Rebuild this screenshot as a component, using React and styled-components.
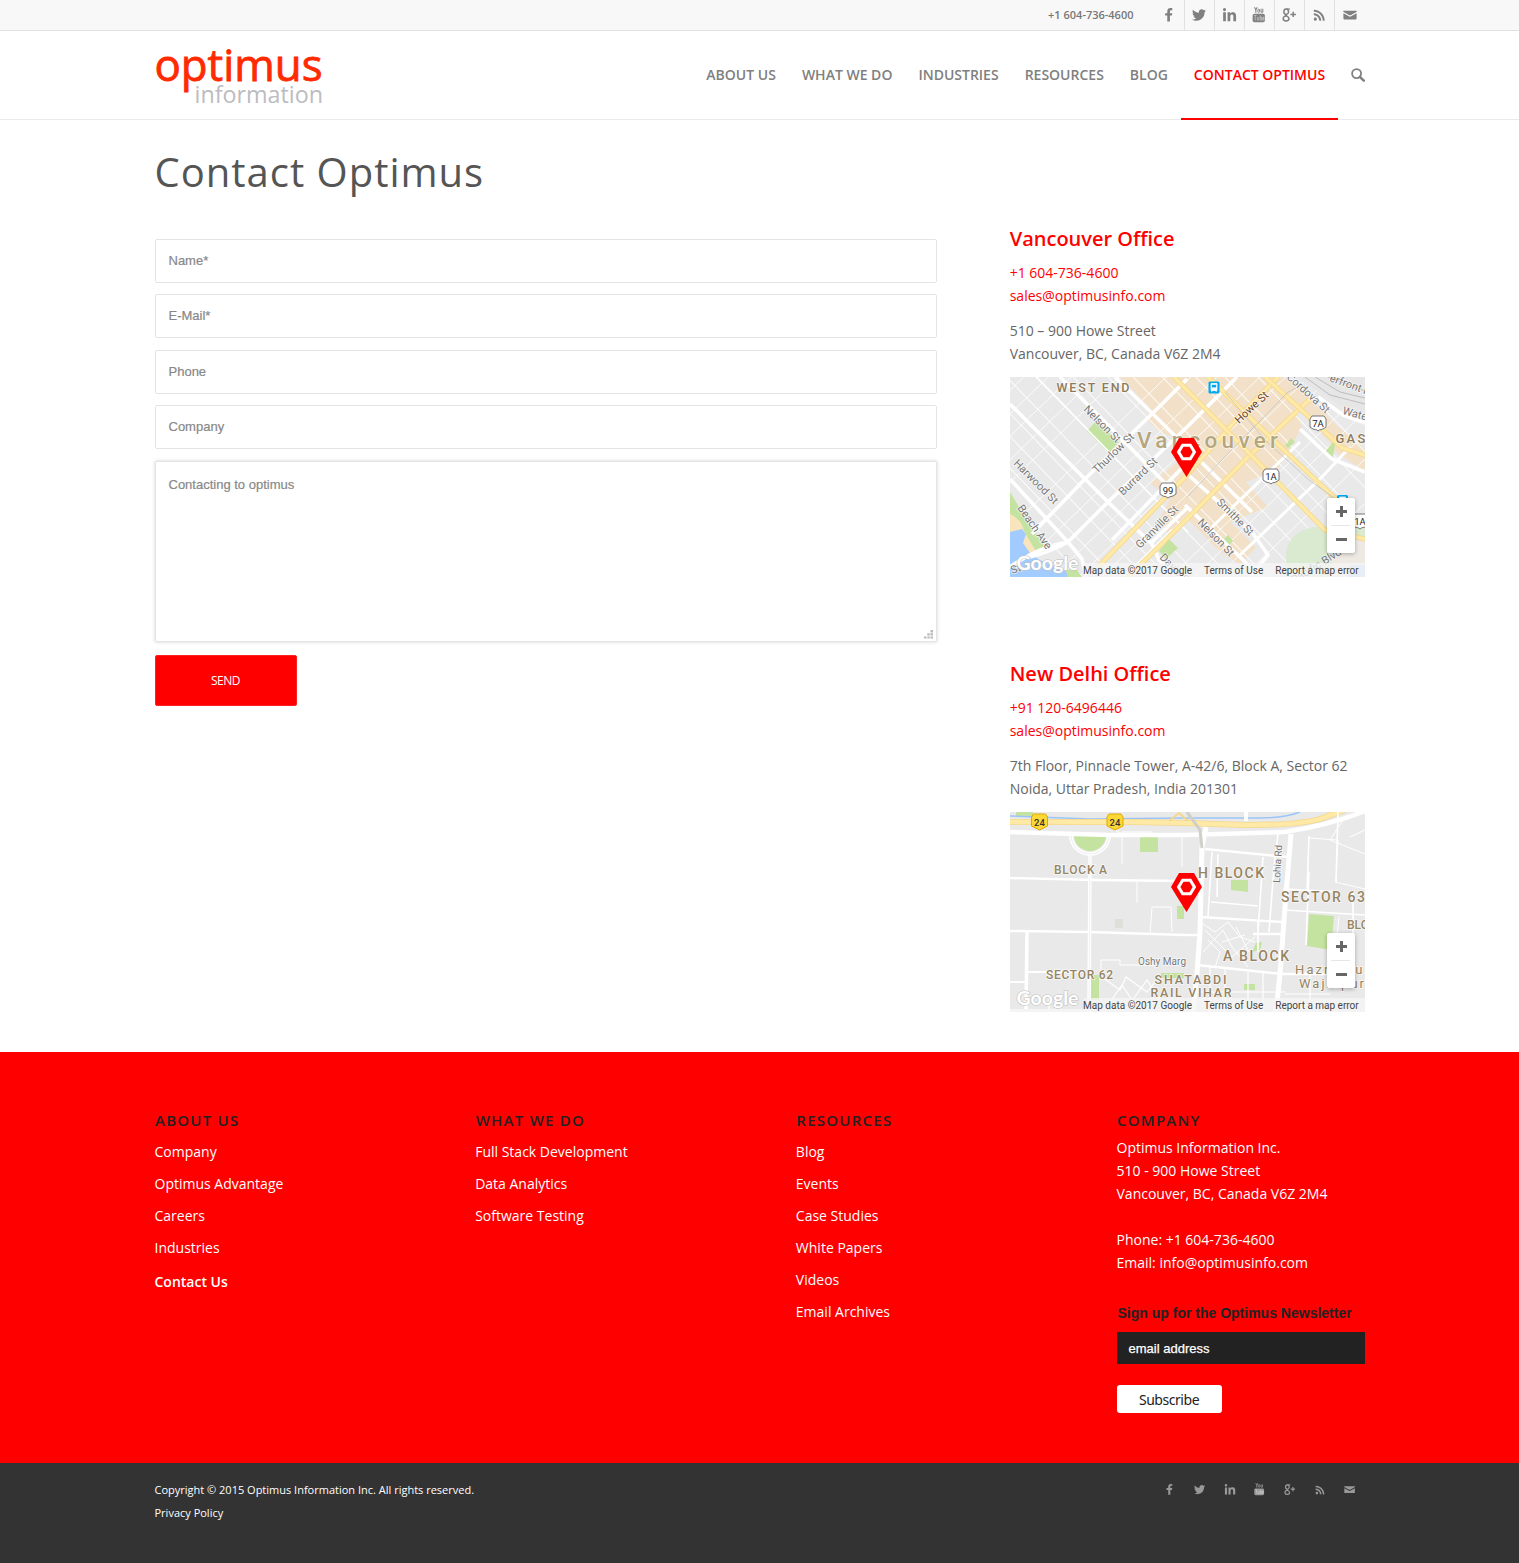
import React from 'react';
import styled, { createGlobalStyle, css } from 'styled-components';
import { FaFacebookF, FaTwitter, FaLinkedinIn, FaRss } from 'react-icons/fa';

const GlobalStyle = createGlobalStyle`
  *, *::before, *::after { box-sizing: border-box; }
  body { margin: 0; background: #fff; font-family: 'Open Sans', 'Noto Sans', sans-serif; font-size: 14px; line-height: 23px; color: #666; }
  a { color: inherit; text-decoration: none; }
  h1, h2, h3, p, ul { margin: 0; padding: 0; font-weight: 400; }
  ul { list-style: none; }
`;

const Container = styled.div`
  width: 1210px;
  margin: 0 auto;
  display: flex;
  justify-content: ${p => p.$justify || 'flex-start'};
`;

/* ---------- top bar ---------- */
const TopBar = styled.div`
  height: 31px;
  background: #f8f8f8;
  border-bottom: 1px solid #e1e1e1;
`;
const TopPhone = styled.div`
  font-size: 11px;
  font-weight: 600;
  line-height: 30px;
  color: #777;
  margin-right: 21px;
`;
const SocialList = styled.ul`
  display: flex;
`;
const SocialItem = styled.li`
  width: 30px;
  height: ${p => (p.$small ? 23 : 30)}px;
  display: flex;
  align-items: center;
  justify-content: center;
  color: ${p => (p.$small ? '#999' : '#808080')};
  ${p => !p.$small && css`
    &:not(:last-child) { border-right: 1px solid #e1e1e1; }
  `}
  svg {
    display: block;
    width: ${p => p.$size * (p.$small ? 0.8 : 1)}px;
    height: ${p => p.$size * (p.$small ? 0.8 : 1)}px;
  }
`;

/* ---------- header ---------- */
const Header = styled.header`
  height: 89px;
  border-bottom: 1px solid #ebebeb;
`;
const Nav = styled.nav`
  display: flex;
`;
const NavLink = styled.a`
  height: 89px;
  line-height: 88px;
  padding: 0 ${p => (p.$active ? 12.4 : 13)}px 0 13px;
  font-size: 14px;
  font-weight: 600;
  white-space: nowrap;
  color: ${p => (p.$active ? '#f00' : '#808080')};
  border-bottom: 2px solid ${p => (p.$active ? '#f00' : 'transparent')};
`;
const SearchLink = styled.a`
  display: flex;
  align-items: center;
  height: 88px;
  padding-left: 13px;
  color: #808080;
`;

/* ---------- main ---------- */
const Main = styled.main`
  height: 932px;
`;
const FormColumn = styled.section`
  width: 782.4px;
  margin-right: 72.8px;
`;
const Title = styled.h1`
  margin-top: 27px;
  height: 91.6px;
  font-size: 40px;
  line-height: 50px;
  letter-spacing: 1px;
  color: #555;
`;
const Field = styled.div`
  height: 44px;
  margin-bottom: 11.5px;
  padding: 0 13px;
  border: 1px solid #e4e4e4;
  border-radius: 2px;
  font: 400 13px/42.6px 'Liberation Sans', Arial, sans-serif;
  -webkit-text-stroke: 0.2px #888;
  color: #888;
`;
const MessageField = styled(Field)`
  height: 181px;
  margin-bottom: 13.4px;
  display: flex;
  justify-content: space-between;
  align-items: flex-end;
  padding-right: 2px;
  line-height: 45px;
  box-shadow: 0 0 3px 1px rgba(0, 0, 0, 0.1);
  span { align-self: flex-start; }
  svg { display: block; margin-bottom: 1px; }
`;
const SendButton = styled.button`
  display: block;
  width: 142px;
  height: 51px;
  border: 1px solid #f22;
  border-radius: 2px;
  background: #f00;
  color: #fff;
  font: 400 12px 'Open Sans', sans-serif;
  letter-spacing: -0.5px;
`;
const Sidebar = styled.aside`
  width: 355px;
  flex: none;
  margin-right: -1px;
  padding-top: 105px;
`;
const Office = styled.section`
  height: 435px;
`;
const OfficeTitle = styled.h2`
  font-size: 20px;
  font-weight: 600;
  line-height: 28px;
  height: 36px;
  color: #f00;
`;
const OfficeLines = styled.p`
  margin-bottom: 12px;
  color: ${p => (p.$red ? '#f00' : '#666')};
  white-space: nowrap;
  span { display: block; }
`;

/* ---------- map ---------- */
const MapBox = styled.div`
  position: relative;
  width: 355px;
  height: 200px;
  overflow: hidden;
  > svg { display: block; }
`;
const ZoomControl = styled.div`
  position: absolute;
  right: 10px;
  bottom: 24px;
  width: 28px;
  height: 55px;
  border-radius: 2px;
  background: #fff;
  box-shadow: 0 1px 4px rgba(0, 0, 0, 0.3);
  svg { display: block; }
`;
const Attribution = styled.div`
  position: absolute;
  right: 0;
  bottom: 0;
  width: 281px;
  height: 14px;
  padding: 0 6px 0 0;
  display: flex;
  justify-content: flex-end;
  gap: 12px;
  background: rgba(245, 245, 245, 0.75);
  font: 400 10px/15px Roboto, sans-serif;
  color: #444;
  white-space: nowrap;
`;

/* ---------- footer ---------- */
const Footer = styled.footer`
  height: 411px;
  background: #f00;
  padding-top: 57px;
  color: #fff;
`;
const FooterColumn = styled.section`
  width: 248px;
  margin-right: ${p => (p.$last ? 0 : 72.7)}px;
  white-space: nowrap;
`;
const FooterTitle = styled.h3`
  padding-left: 0.5px;
  font-size: 15px;
  font-weight: 600;
  line-height: 23px;
  letter-spacing: 1.25px;
  color: #222;
`;
const FooterLink = styled.li`
  height: 32px;
  line-height: 23px;
  padding-top: ${p => (p.$current ? 6 : 4)}px;
  font-weight: ${p => (p.$current ? 600 : 400)};
`;
const Links = styled.ul`
  padding-top: 4px;
`;
const Address = styled.p`
  margin: 4px 0 23px;
  span { display: block; }
`;
const Signup = styled.div`
  display: flex;
  flex-direction: column;
  align-items: flex-start;
  margin-top: 27px;
`;
const SignupLabel = styled.div`
  font: 700 14px/25px 'Liberation Sans', Arial, sans-serif;
  height: 31px;
  padding-left: 1px;
  color: #222;
`;
const EmailField = styled.div`
  width: 100%;
  height: 32px;
  padding-left: 12px;
  background: #222;
  font: 400 13px/33px 'Liberation Sans', Arial, sans-serif;
  -webkit-text-stroke: 0.25px #fff;
  color: #fff;
`;
const Subscribe = styled.button`
  margin-top: 21px;
  width: 105px;
  height: 28px;
  padding: 0;
  border: 0;
  border-radius: 3px;
  background: #fff;
  font: 400 14px/29px 'Noto Sans', sans-serif;
  letter-spacing: -0.45px;
  color: #222;
`;
const Socket = styled.div`
  height: 100px;
  background: #333;
  padding-top: 15px;
  font-size: 11px;
  color: #fff;
  span { display: block; }
`;

/* ---------- icons ---------- */
const YoutubeIcon = () => (
  <svg viewBox="-1 0 16 16" fill="none" stroke="currentColor">
    <path d="M2.6 0.3 4 3 5.4 0.3M4 3V6" strokeWidth="1.1" />
    <rect x="6.1" y="2.3" width="1.7" height="3.3" rx=".8" strokeWidth="1" />
    <path d="M9.4 1.8V5.4H11.2V1.8" strokeWidth="1" />
    <rect x=".7" y="7" width="12.6" height="8.8" rx="1.8" fill="currentColor" stroke="none" />
    <path d="M2 8.8H4.8M3.4 8.8V14M5.6 10.2V13.6H7.1V10.2M8.5 8.5V13.6H9.9V10.5H8.5M12.4 12.5V13.6H11.1V10.5H12.4V12H11.1" stroke="#f0f0f0" strokeOpacity=".75" strokeWidth=".6" />
  </svg>
);
const GooglePlusIcon = () => (
  <svg viewBox="0 0 14 14" fill="none" stroke="currentColor">
    <path d="M8 1H4.1" strokeWidth="1.1" />
    <ellipse cx="4.2" cy="3.7" rx="2.3" ry="2.7" strokeWidth="1.5" />
    <path d="M4 6.3C3.2 7 3.9 7.5 4.9 8.1M4.2 8.1C2.3 8.1 1.2 9 1.2 10.5S2.3 12.9 4 12.9 7 12 7 10.5C7 9.4 6.2 8.8 4.9 8.1Z" strokeWidth="1.5" />
    <path d="M8.4 6.4H13.9M11.2 3.7V9.1" strokeWidth="1.5" />
  </svg>
);
const MailIcon = () => (
  <svg viewBox="0 0 14 14" fill="currentColor">
    <path d="M.6 2.8H13.4C14 2.8 13.8 3.7 13.4 4L7.6 7.2Q7 7.5 6.4 7.2L.6 4C.2 3.7 0 2.8.6 2.8ZM.4 5.2 6.3 8.5Q7 8.8 7.7 8.5L13.6 5.2V10.6Q13.6 11.4 12.8 11.4H1.2Q.4 11.4.4 10.6Z" />
  </svg>
);
const SearchIcon = () => (
  <svg width="14" height="14" viewBox="0 0 14 14" fill="none" stroke="currentColor">
    <circle cx="5.6" cy="5.6" r="4.5" strokeWidth="1.8" />
    <path d="M8.8 8.8 12.8 12.6" strokeWidth="2.5" strokeLinecap="round" />
  </svg>
);
const Logo = () => (
  <svg width="170" height="88" viewBox="0 0 170 88">
    <g fontFamily="'Open Sans', 'Noto Sans', sans-serif">
      <text x="-.5" y="49.7" fontSize="44" fill="#ff2a00" stroke="#ff2a00" strokeWidth=".8" textLength="168" lengthAdjust="spacingAndGlyphs">optimus</text>
      <text x="39.5" y="71.6" fontSize="23" fill="#bcbcc0" textLength="128.5" lengthAdjust="spacingAndGlyphs">information</text>
    </g>
  </svg>
);
const Grip = () => (
  <svg width="10" height="10" viewBox="0 0 10 10" fill="#b8b8b8">
    <path d="M6.5 0h2.5v2.5H6.5zM6.5 3.2h2.5v2.3H6.5zM3.3 3.2h2.4v2.3H3.3zM6.5 6.5h2.5v2H6.5zM3.3 6.5h2.4v2H3.3zM0 6.5h2.4v2H0z" />
  </svg>
);

const socials = [
  { Icon: FaFacebookF, size: 13.5 },
  { Icon: FaTwitter, size: 14 },
  { Icon: FaLinkedinIn, size: 15 },
  { Icon: YoutubeIcon, size: 15.5 },
  { Icon: GooglePlusIcon, size: 14 },
  { Icon: FaRss, size: 12.5 },
  { Icon: MailIcon, size: 14 },
];
const Social = ({ small }) => (
  <SocialList>
    {socials.map(({ Icon, size }, i) => <SocialItem key={i} $small={small} $size={size}><Icon /></SocialItem>)}
  </SocialList>
);

/* ---------- map drawings ---------- */
const Road = ({ d, w = 3, c = '#fff' }) => (
  <path d={d} fill="none" stroke={c} strokeWidth={w} strokeLinejoin="round" />
);
const Highway = ({ d, w = 4 }) => (
  <>
    <Road d={d} w={w + 1} c="#f5d78c" />
    <Road d={d} w={w - 0.6} c="#ffe9a6" />
  </>
);
const Label = ({ x, y, size = 11, rotate = 0, color = '#777', len, weight = 400, children }) => (
  <text
    transform={`translate(${x} ${y}) rotate(${rotate})`}
    fontFamily="Roboto, sans-serif"
    fontSize={size}
    fontWeight={weight}
    fill={color}
    stroke="#fff"
    strokeOpacity=".7"
    strokeWidth="1.6"
    paintOrder="stroke"
    textLength={len}
  >
    {children}
  </text>
);
const Pin = () => (
  <g>
    <path d="M169 61H184L192 75 176.5 100 161 75Z" fill="#f00" />
    <path d="M171.8 66.8H181.2L186.2 75 181.2 83.2H171.8L166.8 75Z" fill="#fff" />
    <path d="M173.5 69.8H179.5L182.6 75 179.5 80.2H173.5L170.4 75Z" fill="#f00" />
  </g>
);
const GoogleMark = () => (
  <text x="6.5" y="192.5" fontFamily="Lato, sans-serif" fontSize="19.5" fontWeight="700" fill="#fff" stroke="#c0c0c0" strokeWidth="1.2" paintOrder="stroke" textLength="62">Google</text>
);
const Shield = ({ x, y, children }) => (
  <g>
    <path d={`M${x - 6} ${y - 7}H${x + 6}L${x + 8} ${y - 4}V${y + 4}L${x + 5} ${y + 6}Q${x} ${y + 7} ${x} ${y + 8}Q${x} ${y + 7} ${x - 5} ${y + 6}L${x - 8} ${y + 4}V${y - 4}Z`} fill="#fff" stroke="#777" />
    <text x={x} y={y + 3.5} textAnchor="middle" fontFamily="Roboto, sans-serif" fontSize="9.5" fill="#222">{children}</text>
  </g>
);
const YellowShield = ({ x }) => (
  <g>
    <path d={`M${x - 6} 2H${x + 6}L${x + 8} 5V14L${x} 18 ${x - 8} 14V5Z`} fill="#fdd835" stroke="#dca900" />
    <text x={x} y="13.5" textAnchor="middle" fontFamily="Roboto, sans-serif" fontSize="9.5" fontWeight="500" fill="#333">24</text>
  </g>
);
const Transit = ({ x, y }) => (
  <g transform={`translate(${x} ${y})`}>
    <rect width="11" height="12" rx="1.5" fill="#00a9ef" />
    <path d="M2.5 2H8.5V9H2.5ZM3 10.5 4 9M8 10.5 7 9" fill="#fff" stroke="#fff" strokeWidth=".8" />
    <rect x="3.3" y="3.3" width="4.4" height="2.6" fill="#00a9ef" />
  </g>
);

const acrossStreets = [-150, -132, -116, -99, -83, -66, -50, -17, 0, 18, 48, 66, 82, 97, 130, 146, 162, 180, 212, 228, 245, 262, 280, 297];
const downStreets = [-210, -191, -166, -145, -122, -100, -84, -61, -39, -13, 12, 30, 51, 75, 96, 120, 145, 168, 190];

const VancouverDrawing = () => (
  <svg width="355" height="200" viewBox="0 0 355 200">
    <rect width="355" height="200" fill="#e9e9e9" />
    <path d="M110 0H240L275 14 300 46 330 75 355 84V72L326 48 290 12 276 0H255L238 0H110L139 30 138 44 150 55 164 60 172 70 180 76 140 106 160 122 148 145 162 160 178 142 205 170 230 188 246 170 220 145 258 130 236 105 268 92 292 50 280 20 255 0Z" fill="#f2e1c8" />
    <path d="M300 30 355 75V94L325 75Z" fill="#f2e1c8" />
    <g transform="translate(178 100) rotate(-44)">
      {acrossStreets.map(y => <path key={y} d={`M-260 ${y - 70}H260`} stroke="#fff" strokeWidth=".9" strokeOpacity=".85" />)}
      {downStreets.map(x => <path key={x} d={`M${x} -250V250`} stroke="#fff" strokeWidth="1" strokeOpacity=".85" />)}
    </g>
    <path d="M285 0H355V38L330 28Z" fill="#e6e6e6" />
    <Road d="M295 0 320 18 355 27M305 0 330 15 355 21M318 0 355 14" w={1} c="#bdbdbd" />
    <path d="M0 115 18 145 36 171 30 178 22 180 0 145Z" fill="#c5e3a0" />
    <path d="M0 137Q12 143 14 154L27 176 16 181 0 165Z" fill="#f8e4bd" />
    <path d="M0 155 12 152 16 157 13 166 20 176 30 183 70 200H0Z" fill="#a2ccff" />
    <path d="M86 44 77 54 99 76 109 65Z" fill="#c5e3a0" />
    <path d="M159 162 168 171 156 182 149 174ZM56 194 65 190 72 200H58Z" fill="#c5e3a0" />
    <path d="M326 61 315 75 323 80ZM275 69 281 61 285 65 278 71ZM214 162 218 158 223 164 219 168Z" fill="#c5e3a0" />
    <path d="M276 177Q278 155 304 150H355V200H276Z" fill="#d9ead0" />
    <path d="M325 160 355 164V200H320Z" fill="#eeeae3" />
    <path d="M340 188H355V200H337Z" fill="#bdd6f8" />
    <Road d="M0 27 75 102 98 125 142 167 149 183 172 200M0 102 58 165M50 0 98 48 155 106" w={3.6} />
    <Road d="M26 0 73 48 138 115 178 155" w={1.5} />
    <Road d="M22 157 75 102 152 27 177 2M58 165 98 125 177 50 227 0M102 163 175 88M142 165 178 130M20 180Q40 175 58 165L72 182 76 200M0 190Q28 170 58 165" w={3.6} />
    <Road d="M115 200 163 153M175 95 242 155 258 178 240 200M175 128 230 180 250 200M105 0 147 41 175 69 242 135M290 52 322 82 355 95M308 20 333 38 355 46" w={3.6} />
    <Road d="M230 178 312 100 340 70M202 150 290 65" w={3} />
    <Highway d="M88 190 177 98 225 44 268 0" w={4} />
    <Highway d="M115 203 177 142 238 80 300 22" w={4} />
    <Highway d="M164 0 238 75 315 153 355 162M198 0 255 55 328 124M255 0 308 48 332 71 355 78" w={4} />
    <Road d="M177 120 210 85 278 15 292 8M215 15 255 63 299 103 330 125" w={0.8} c="#c3c3c3" />
    <Label x={46.5} y={14.5} size={12.5} weight={500} color="#8f7a58" len={73}>WEST END</Label>
    <Label x={127} y={70.5} size={22.5} weight={500} color="#b5a67e" len={141}>Vancouver</Label>
    <Label x={325.5} y={65.5} size={13} weight={500} color="#8f7a58" len={40}>GAST</Label>
    <Label x={73} y={33} rotate={45}>Nelson St</Label>
    <Label x={3} y={87} rotate={45}>Harwood St</Label>
    <Label x={7} y={131} rotate={55}>Beach Ave</Label>
    <Label x={87} y={97} rotate={-44}>Thurlow St</Label>
    <Label x={113} y={119} rotate={-44}>Burrard St</Label>
    <Label x={130} y={172} rotate={-45}>Granville St</Label>
    <Label x={149} y={181} rotate={45}>Davie St</Label>
    <Label x={229} y={47} rotate={-43} color="#6b4226">Howe St</Label>
    <Label x={206} y={126} rotate={45}>Smithe St</Label>
    <Label x={187} y={146} rotate={46}>Nelson St</Label>
    <Label x={276} y={1} rotate={42}>Cordova St</Label>
    <Label x={319} y={4} rotate={20}>erfront Rd</Label>
    <Label x={332} y={37} rotate={15}>Water St</Label>
    <Label x={284} y={207} rotate={-32}>Pacific Blvd</Label>
    <Label x={2} y={197} rotate={-18}>St</Label>
    <Shield x={158} y={113}>99</Shield>
    <Shield x={308} y={46}>7A</Shield>
    <Shield x={261} y={99}>1A</Shield>
    <Shield x={350} y={144}>1A</Shield>
    <Transit x={198.5} y={4.5} />
    <Transit x={327} y={118} />
    <Pin />
    <GoogleMark />
  </svg>
);

const DelhiDrawing = () => (
  <svg width="355" height="200" viewBox="0 0 355 200">
    <rect width="355" height="200" fill="#e9e9e9" />
    <path d="M6 0H23V5H6ZM130 25H148V40H130ZM167 94H174V107H167ZM81 163H89V188H81ZM221 68H238V80L221 78ZM299 102 324 104 321 138 297 134ZM242 140 246 131 252 130 250 138ZM234 172H245V178H234ZM151 161H174V166H151Z" fill="#c5e3a0" />
    <path d="M105 107H113V116H105Z" fill="#dedfd7" />
    <path d="M64 23H96A16 16 0 0 1 64 23Z" fill="#c5e3a0" />
    <Road d="M61 23A19 19 0 0 0 99 23" w={4} />
    <Road d="M61 23A19 19 0 0 0 99 23" w={0.7} c="#e3e3e3" />
    <Road d="M0 4 80 7 170 6 250 6Q275 6 290 0" w={1.5} c="#9bc5fa" />
    <Road d="M0 20 100 23 175 23 275 20Q320 13 355 -1" w={4.5} />
    <Highway d="M0 10H125L175 11 235 13Q290 13 310 7L335 -2" w={5} />
    <Road d="M159 9 169 1 178 9" w={2} c="#f5d78c" />
    <Road d="M0 66 85 68 175 69M0 119 80 120 175 123H190" w={2.4} />
    <Road d="M80 42 79 200M17 120 16 200" w={3.5} />
    <Road d="M80 42 79 200" w={0.6} c="#e5e5e5" />
    <Road d="M17 160H75M0 170H16" w={2} />
    <Road d="M196 15 192 35 190 120 187 162 183 200M281 22 275 95 270 162 266 200" w={5} />
    <Road d="M177 0 190 18 192 36" w={3} c="#d0d0c9" />
    <Road d="M236 0V9" w={4} />
    <Road d="M195 37 278 45M190 105 272 110M187 153 272 162H320M243 122H273" w={2.4} />
    <Road d="M268 22 264 55 259 120M253 45 248 120M202 40 198 104M208 42 207 85M273 77 330 80M274 98 355 103M201 90 248 94M248 110V140M299 24 297 80M299 60 296 133M328 0 326 70M343 80V130" w={1.6} />
    <Road d="M298 26 328 28 326 70M325 70 355 77M333 8 320 28 355 42M340 25 355 18M329 105 324 150" w={1} />
    <Road d="M190 110 205 120 218 110 230 125 245 130M193 140 213 118 222 135 238 155M195 118 222 145 245 125M205 156 210 140 198 128M212 130 235 123M226 115 239 140" w={1} />
    <Road d="M142 20 112 20V52M127 70V91M140 122 142 95H161L162 120M91 165V148H110V153H145M172 25V55M104 17 112 22" w={1} />
    <Road d="M92 165 110 178 116 165 137 180 145 170M100 190 112 173 126 194M121 190 137 168 150 188M39 184V200" w={1.2} />
    <Road d="M200 155V200M215 157V200M238 160V200M253 160V200M187 180H275M275 182H320M300 162V200" w={1.2} />
    <path d="M0 197H75V200H0Z" fill="#f4f4f4" />
    <Label x={44} y={62} size={12} weight={500} color="#968461" len={53}>BLOCK A</Label>
    <Label x={188} y={66} size={14} weight={500} color="#968461" len={66}>H BLOCK</Label>
    <Label x={271} y={90} size={14} weight={500} color="#968461" len={84}>SECTOR 63</Label>
    <Label x={213} y={149} size={14} weight={500} color="#968461" len={66}>A BLOCK</Label>
    <Label x={337} y={116.5} size={12} weight={500} color="#968461">BLOCK</Label>
    <Label x={36} y={167} size={12} weight={500} color="#968461" len={67}>SECTOR 62</Label>
    <Label x={144.5} y={172} size={12.5} weight={500} color="#968461" len={72}>SHATABDI</Label>
    <Label x={140.5} y={185} size={12.5} weight={500} color="#968461" len={81}>RAIL VIHAR</Label>
    <Label x={285} y={162} size={13} color="#968461" len={74}>Hazratpur</Label>
    <Label x={289} y={176} size={13} color="#968461" len={65}>Wajidpur</Label>
    <Label x={128} y={153} size={10} len={48}>Oshy Marg</Label>
    <Label x={270} y={71} size={10} rotate={-87} len={38}>Lohia Rd</Label>
    <YellowShield x={29.5} />
    <YellowShield x={105} />
    <Pin />
    <GoogleMark />
  </svg>
);

const Map = ({ children }) => (
  <MapBox>
    {children}
    <ZoomControl>
      <svg width="28" height="55" viewBox="0 0 28 55">
        <path d="M9 13.5H20M14.5 8V19M9 41.5H20" stroke="#666" strokeWidth="3" />
        <path d="M4 27.5H23" stroke="#e6e6e6" />
      </svg>
    </ZoomControl>
    <Attribution>
      <span>Map data ©2017 Google</span>
      <span>Terms of Use</span>
      <span>Report a map error</span>
    </Attribution>
  </MapBox>
);

const navItems = ['ABOUT US', 'WHAT WE DO', 'INDUSTRIES', 'RESOURCES', 'BLOG', 'CONTACT OPTIMUS'];
const footerColumns = [
  { title: 'ABOUT US', links: ['Company', 'Optimus Advantage', 'Careers', 'Industries', 'Contact Us'] },
  { title: 'WHAT WE DO', links: ['Full Stack Development', 'Data Analytics', 'Software Testing'] },
  { title: 'RESOURCES', links: ['Blog', 'Events', 'Case Studies', 'White Papers', 'Videos', 'Email Archives'] },
];

export default function App() {
  return (
    <>
      <GlobalStyle />
      <TopBar>
        <Container $justify="flex-end">
          <TopPhone>+1 604-736-4600</TopPhone>
          <Social />
        </Container>
      </TopBar>
      <Header>
        <Container $justify="space-between">
          <Logo />
          <Nav>
            {navItems.map(item => (
              <NavLink key={item} href="#" $active={item === 'CONTACT OPTIMUS'}>{item}</NavLink>
            ))}
            <SearchLink href="#"><SearchIcon /></SearchLink>
          </Nav>
        </Container>
      </Header>
      <Main>
        <Container>
          <FormColumn>
            <Title>Contact Optimus</Title>
            <Field>Name*</Field>
            <Field>E-Mail*</Field>
            <Field>Phone</Field>
            <Field>Company</Field>
            <MessageField><span>Contacting to optimus</span><Grip /></MessageField>
            <SendButton>SEND</SendButton>
          </FormColumn>
          <Sidebar>
            <Office>
              <OfficeTitle>Vancouver Office</OfficeTitle>
              <OfficeLines $red><span>+1 604-736-4600</span><span>sales@optimusinfo.com</span></OfficeLines>
              <OfficeLines><span>510 – 900 Howe Street</span><span>Vancouver, BC, Canada V6Z 2M4</span></OfficeLines>
              <Map><VancouverDrawing /></Map>
            </Office>
            <Office>
              <OfficeTitle>New Delhi Office</OfficeTitle>
              <OfficeLines $red><span>+91 120-6496446</span><span>sales@optimusinfo.com</span></OfficeLines>
              <OfficeLines><span>7th Floor, Pinnacle Tower, A-42/6, Block A, Sector 62</span><span>Noida, Uttar Pradesh, India 201301</span></OfficeLines>
              <Map><DelhiDrawing /></Map>
            </Office>
          </Sidebar>
        </Container>
      </Main>
      <Footer>
        <Container>
          {footerColumns.map(col => (
            <FooterColumn key={col.title}>
              <FooterTitle>{col.title}</FooterTitle>
              <Links>
                {col.links.map(link => <FooterLink key={link} $current={link === 'Contact Us'}>{link}</FooterLink>)}
              </Links>
            </FooterColumn>
          ))}
          <FooterColumn $last>
            <FooterTitle>COMPANY</FooterTitle>
            <Address>
              <span>Optimus Information Inc.</span>
              <span>510 - 900 Howe Street</span>
              <span>Vancouver, BC, Canada V6Z 2M4</span>
            </Address>
            <Address>
              <span>Phone: +1 604-736-4600</span>
              <span>Email: info@optimusinfo.com</span>
            </Address>
            <Signup>
              <SignupLabel>Sign up for the Optimus Newsletter</SignupLabel>
              <EmailField>email address</EmailField>
              <Subscribe>Subscribe</Subscribe>
            </Signup>
          </FooterColumn>
        </Container>
      </Footer>
      <Socket>
        <Container $justify="space-between">
          <div>
            <span>Copyright © 2015 Optimus Information Inc. All rights reserved.</span>
            <span>Privacy Policy</span>
          </div>
          <Social small />
        </Container>
      </Socket>
    </>
  );
}
